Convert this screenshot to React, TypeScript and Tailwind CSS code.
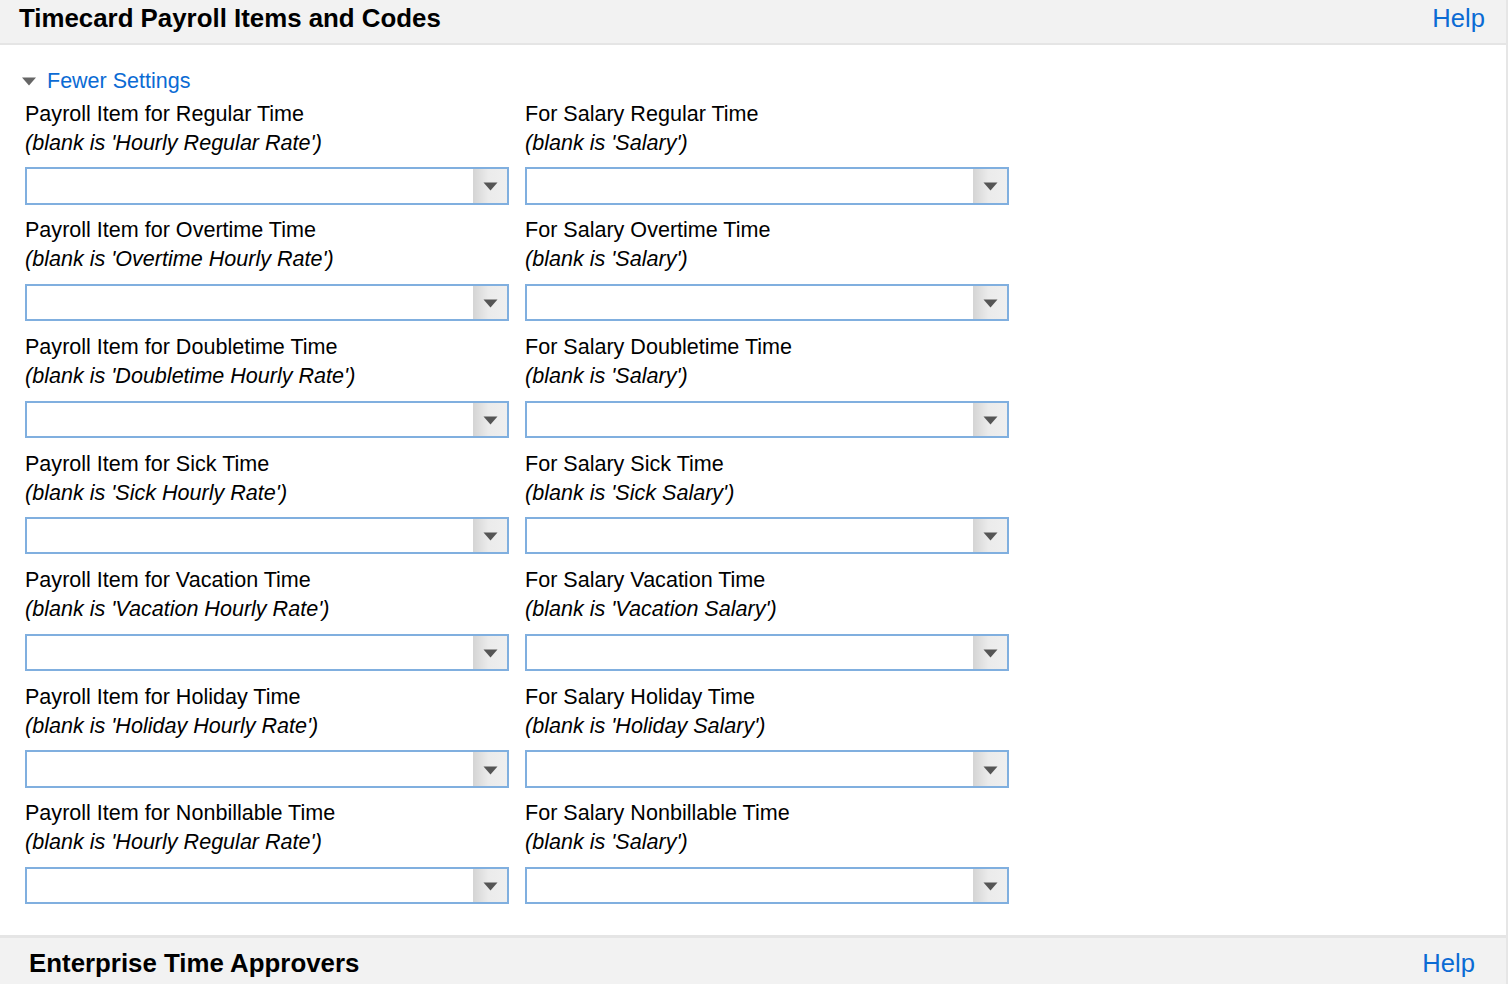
import React from "react";

const rows: [string, string, string, string][] = [
  ["Payroll Item for Regular Time", "(blank is 'Hourly Regular Rate')", "For Salary Regular Time", "(blank is 'Salary')"],
  ["Payroll Item for Overtime Time", "(blank is 'Overtime Hourly Rate')", "For Salary Overtime Time", "(blank is 'Salary')"],
  ["Payroll Item for Doubletime Time", "(blank is 'Doubletime Hourly Rate')", "For Salary Doubletime Time", "(blank is 'Salary')"],
  ["Payroll Item for Sick Time", "(blank is 'Sick Hourly Rate')", "For Salary Sick Time", "(blank is 'Sick Salary')"],
  ["Payroll Item for Vacation Time", "(blank is 'Vacation Hourly Rate')", "For Salary Vacation Time", "(blank is 'Vacation Salary')"],
  ["Payroll Item for Holiday Time", "(blank is 'Holiday Hourly Rate')", "For Salary Holiday Time", "(blank is 'Holiday Salary')"],
  ["Payroll Item for Nonbillable Time", "(blank is 'Hourly Regular Rate')", "For Salary Nonbillable Time", "(blank is 'Salary')"],
];

function Select() {
  return (
    <div className="mt-[10.67px] flex h-[37.33px] w-[484px] border-2 border-[#80afdf] bg-white">
      <div className="flex-1" />
      <div className="flex w-[34px] items-center justify-center bg-[linear-gradient(to_right,#d4d4d4,#ebebeb_45%,#efefef)]">
        <svg className="mt-[2px]" width="15" height="9" viewBox="0 0 15 9">
          <path d="M0.5 0.5 L14.5 0.5 L7.5 8.5 Z" fill="#555555" />
        </svg>
      </div>
    </div>
  );
}

function Field({ label, hint }: { label: string; hint: string }) {
  return (
    <div className="flex flex-col">
      <div className="text-[21.55px] leading-[29px] text-black">{label}</div>
      <div className="text-[21.55px] italic leading-[29px] text-black">{hint}</div>
      <Select />
    </div>
  );
}

export default function App() {
  return (
    <div className="min-h-[984px] w-[1508px] border-r-2 border-[#e6e6e6] bg-white font-['Liberation_Sans',Arial,sans-serif] text-black">
      <div className="box-border flex h-[45px] items-start justify-between border-b-2 border-[#e5e5e5] bg-[#f2f2f2] pl-[19px] pr-[21px] pt-[4px]">
        <div className="text-[25.85px] font-bold leading-[29px]">Timecard Payroll Items and Codes</div>
        <div className="text-[25.6px] leading-[29px] text-[#0b6bd4]">Help</div>
      </div>

      <div className="pb-[30.4px] pl-[22px] pt-[21.9px]">
        <div className="flex h-[29px] items-start">
          <svg className="mt-[10.6px]" width="14" height="9" viewBox="0 0 14 9">
            <path d="M0 0.5 L14 0.5 L7 8.5 Z" fill="#666666" />
          </svg>
          <span className="ml-[11px] text-[21.5px] leading-[29px] text-[#0b6bd4]">Fewer Settings</span>
        </div>
        <div className="mt-[2.7px] grid grid-cols-[484px_484px] gap-x-[16px] gap-y-[10.67px] pl-[3px]">
          {rows.map((r, i) => (
            <React.Fragment key={i}>
              <Field label={r[0]} hint={r[1]} />
              <Field label={r[2]} hint={r[3]} />
            </React.Fragment>
          ))}
        </div>
      </div>

      <div className="flex min-h-[49px] items-start justify-between border-t-[3px] border-[#e5e5e5] bg-[#f2f2f2] pl-[29px] pr-[31px] pt-[11.3px]">
        <div className="text-[25.85px] font-bold leading-[29px]">Enterprise Time Approvers</div>
        <div className="text-[25.6px] leading-[29px] text-[#0b6bd4]">Help</div>
      </div>
    </div>
  );
}
